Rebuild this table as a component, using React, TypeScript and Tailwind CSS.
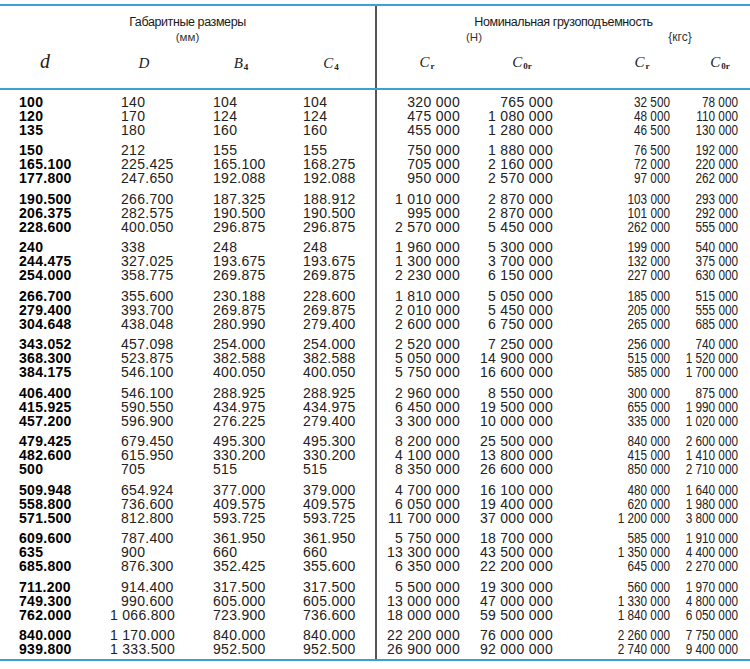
import React from "react";

type Row = string[];

const groups: Row[][] = [
  [
    ["100", "140", "104", "104", "320 000", "765 000", "32 500", "78 000"],
    ["120", "170", "124", "124", "475 000", "1 080 000", "48 000", "110 000"],
    ["135", "180", "160", "160", "455 000", "1 280 000", "46 500", "130 000"],
  ],
  [
    ["150", "212", "155", "155", "750 000", "1 880 000", "76 500", "192 000"],
    ["165.100", "225.425", "165.100", "168.275", "705 000", "2 160 000", "72 000", "220 000"],
    ["177.800", "247.650", "192.088", "192.088", "950 000", "2 570 000", "97 000", "262 000"],
  ],
  [
    ["190.500", "266.700", "187.325", "188.912", "1 010 000", "2 870 000", "103 000", "293 000"],
    ["206.375", "282.575", "190.500", "190.500", "995 000", "2 870 000", "101 000", "292 000"],
    ["228.600", "400.050", "296.875", "296.875", "2 570 000", "5 450 000", "262 000", "555 000"],
  ],
  [
    ["240", "338", "248", "248", "1 960 000", "5 300 000", "199 000", "540 000"],
    ["244.475", "327.025", "193.675", "193.675", "1 300 000", "3 700 000", "132 000", "375 000"],
    ["254.000", "358.775", "269.875", "269.875", "2 230 000", "6 150 000", "227 000", "630 000"],
  ],
  [
    ["266.700", "355.600", "230.188", "228.600", "1 810 000", "5 050 000", "185 000", "515 000"],
    ["279.400", "393.700", "269.875", "269.875", "2 010 000", "5 450 000", "205 000", "555 000"],
    ["304.648", "438.048", "280.990", "279.400", "2 600 000", "6 750 000", "265 000", "685 000"],
  ],
  [
    ["343.052", "457.098", "254.000", "254.000", "2 520 000", "7 250 000", "256 000", "740 000"],
    ["368.300", "523.875", "382.588", "382.588", "5 050 000", "14 900 000", "515 000", "1 520 000"],
    ["384.175", "546.100", "400.050", "400.050", "5 750 000", "16 600 000", "585 000", "1 700 000"],
  ],
  [
    ["406.400", "546.100", "288.925", "288.925", "2 960 000", "8 550 000", "300 000", "875 000"],
    ["415.925", "590.550", "434.975", "434.975", "6 450 000", "19 500 000", "655 000", "1 990 000"],
    ["457.200", "596.900", "276.225", "279.400", "3 300 000", "10 000 000", "335 000", "1 020 000"],
  ],
  [
    ["479.425", "679.450", "495.300", "495.300", "8 200 000", "25 500 000", "840 000", "2 600 000"],
    ["482.600", "615.950", "330.200", "330.200", "4 100 000", "13 800 000", "415 000", "1 410 000"],
    ["500", "705", "515", "515", "8 350 000", "26 600 000", "850 000", "2 710 000"],
  ],
  [
    ["509.948", "654.924", "377.000", "379.000", "4 700 000", "16 100 000", "480 000", "1 640 000"],
    ["558.800", "736.600", "409.575", "409.575", "6 050 000", "19 400 000", "620 000", "1 980 000"],
    ["571.500", "812.800", "593.725", "593.725", "11 700 000", "37 000 000", "1 200 000", "3 800 000"],
  ],
  [
    ["609.600", "787.400", "361.950", "361.950", "5 750 000", "18 700 000", "585 000", "1 910 000"],
    ["635", "900", "660", "660", "13 300 000", "43 500 000", "1 350 000", "4 400 000"],
    ["685.800", "876.300", "352.425", "355.600", "6 350 000", "22 200 000", "645 000", "2 270 000"],
  ],
  [
    ["711.200", "914.400", "317.500", "317.500", "5 500 000", "19 300 000", "560 000", "1 970 000"],
    ["749.300", "990.600", "605.000", "605.000", "13 000 000", "47 000 000", "1 330 000", "4 800 000"],
    ["762.000", "1 066.800", "723.900", "736.600", "18 000 000", "59 500 000", "1 840 000", "6 050 000"],
  ],
  [
    ["840.000", "1 170.000", "840.000", "840.000", "22 200 000", "76 000 000", "2 260 000", "7 750 000"],
    ["939.800", "1 333.500", "952.500", "952.500", "26 900 000", "92 000 000", "2 740 000", "9 400 000"],
  ],
];

const sans = "font-['Liberation_Sans',Arial,sans-serif]";
const serif = "font-['Liberation_Serif','Times_New_Roman',serif]";

function Sym({ base, sub, big }: { base: string; sub?: string; big?: boolean }) {
  return (
    <span className={`${serif} italic text-[#222] ${big ? "text-[20px]" : "text-[15px]"}`}>
      {base}
      {sub ? (
        <span className="not-italic text-[9px] font-bold relative top-[2px] ml-[1px]">{sub}</span>
      ) : null}
    </span>
  );
}

export default function App() {
  const line = "bg-[#3d9fd2]";
  return (
    <div className="w-[750px] h-[669px] bg-white pt-[4px] overflow-hidden">
      <div className={`h-[2px] ${line}`} />
      {/* Header */}
      <div className="flex h-[82px]">
        <div className="w-[375px] shrink-0 flex flex-col">
          <div className={`${sans} text-center text-[#1a1a1a] text-[12.5px] leading-[14px] tracking-[-0.4px] mt-[9px]`}>
            Габаритные размеры
          </div>
          <div className={`${sans} text-center text-[#333] text-[11.5px] leading-[12px] mt-[2px]`}>(мм)</div>
          <div className="flex items-baseline mt-[8px] leading-[20px]">
            <div className="w-[90px] shrink-0 text-center">
              <Sym base="d" big />
            </div>
            <div className="w-[108px] shrink-0 text-center">
              <Sym base="D" />
            </div>
            <div className="w-[86px] shrink-0 text-center">
              <Sym base="B" sub="4" />
            </div>
            <div className="w-[82px] ml-[6px] shrink-0 text-center">
              <Sym base="C" sub="4" />
            </div>
          </div>
        </div>
        <div className="w-[2px] shrink-0 bg-[#555]" />
        <div className="flex-1 min-w-0 flex flex-col">
          <div className={`${sans} text-center text-[#1a1a1a] text-[12.5px] leading-[14px] tracking-[-0.4px] mt-[9px]`}>
            Номинальная грузоподъемность
          </div>
          <div className={`${sans} flex text-[#333] text-[11.5px] leading-[12px] mt-[2px]`}>
            <div className="w-[194px] shrink-0 text-center">(Н)</div>
            <div className="w-[140px] ml-[39px] shrink-0 text-center text-[12px]">{"{кгс}"}</div>
          </div>
          <div className="flex items-baseline mt-[8px] leading-[20px]">
            <div className="w-[100px] shrink-0 text-center">
              <Sym base="C" sub="r" />
            </div>
            <div className="w-[90px] shrink-0 text-center">
              <Sym base="C" sub="0r" />
            </div>
            <div className="w-[60px] ml-[45px] shrink-0 text-center">
              <Sym base="C" sub="r" />
            </div>
            <div className="w-[60px] ml-[18px] shrink-0 text-center">
              <Sym base="C" sub="0r" />
            </div>
          </div>
        </div>
      </div>
      <div className={`h-[2px] ${line}`} />
      {/* Body */}
      <div className="flex h-[569px]">
        <div className="w-[375px] shrink-0 pt-[4.5px]">
          {groups.map((g, gi) => (
            <div key={gi} className={gi === 0 ? "" : "mt-[6.5px]"}>
              {g.map((r, ri) => (
                <div key={ri} className={`${sans} flex text-[14px] leading-[14px] tracking-[0.3px]`}>
                  <div className="w-[121px] shrink-0 pl-[19px] font-bold text-black">{r[0]}</div>
                  <div className="w-[92px] shrink-0 text-[#222]">
                    <span className={r[1].includes(" ") ? "-ml-[11px]" : ""}>{r[1]}</span>
                  </div>
                  <div className="w-[90px] shrink-0 text-[#222]">{r[2]}</div>
                  <div className="flex-1 text-[#222]">{r[3]}</div>
                </div>
              ))}
            </div>
          ))}
        </div>
        <div className="w-[2px] shrink-0 bg-[#555]" />
        <div className="flex-1 min-w-0 pt-[4.5px]">
          {groups.map((g, gi) => (
            <div key={gi} className={gi === 0 ? "" : "mt-[6.5px]"}>
              {g.map((r, ri) => (
                <div key={ri} className={`${sans} flex text-[14px] leading-[14px] text-[#222]`}>
                  <div className="w-[83px] shrink-0 text-right tracking-[0.3px]">{r[4]}</div>
                  <div className="w-[93px] shrink-0 text-right tracking-[0.3px]">{r[5]}</div>
                  <div className="w-[117px] shrink-0 text-right origin-right scale-x-[0.84]">{r[6]}</div>
                  <div className="w-[68px] shrink-0 text-right origin-right scale-x-[0.84]">{r[7]}</div>
                </div>
              ))}
            </div>
          ))}
        </div>
      </div>
      <div className={`h-[2px] ${line}`} />
    </div>
  );
}
